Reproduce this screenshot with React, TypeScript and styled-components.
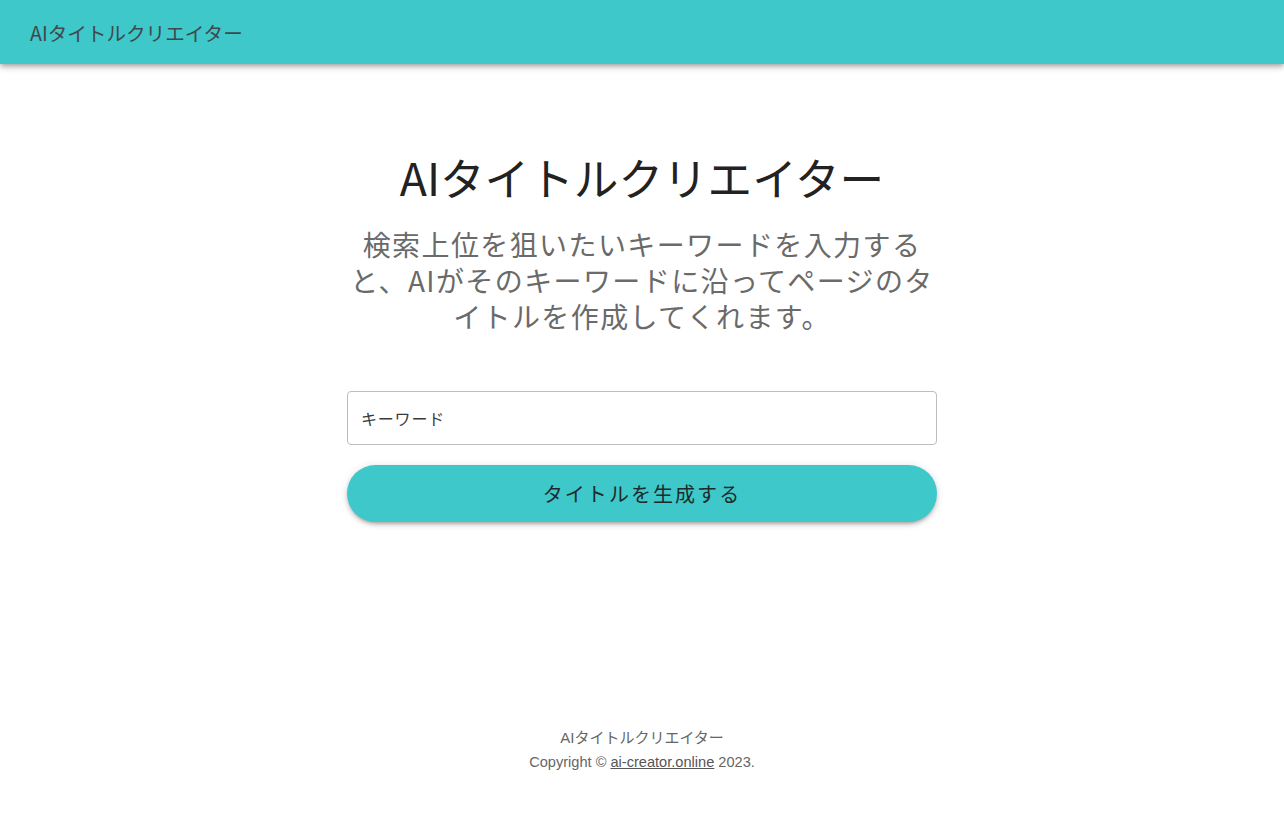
import React from "react";
import styled, { createGlobalStyle } from "styled-components";

const Global = createGlobalStyle`
  html, body { margin: 0; padding: 0; background: #fff; }
  body { font-family: "Noto Sans CJK JP", "Noto Sans", sans-serif; }
  * { box-sizing: border-box; }
`;

const Page = styled.div`
  min-height: 832px;
  display: flex;
  flex-direction: column;
`;

const Header = styled.header`
  height: 64px;
  background: #3ec8c9;
  display: flex;
  align-items: center;
  padding: 0 30px;
  box-shadow: 0 2px 4px -1px rgba(0,0,0,0.2), 0 4px 5px 0 rgba(0,0,0,0.14), 0 1px 10px 0 rgba(0,0,0,0.12);
  position: relative;
  z-index: 1;
`;

const HeaderTitle = styled.div`
  font-size: 19.6px;
  color: #3d4a4b;
`;

const Main = styled.main`
  flex: 1;
  display: flex;
  flex-direction: column;
  align-items: center;
  padding-top: 81px;
`;

const Column = styled.div`
  width: 590px;
  display: flex;
  flex-direction: column;
  align-items: stretch;
`;

const Title = styled.h1`
  margin: 0;
  font-size: 44.6px;
  font-weight: 400;
  line-height: 64px;
  color: #222;
  text-align: center;
`;

const Subtitle = styled.p`
  margin: 17px 0 0;
  font-size: 28px;
  line-height: 36px;
  letter-spacing: 1.4px;
  color: #6a6a6a;
  text-align: center;
`;

const Input = styled.input`
  margin-top: 57px;
  height: 54px;
  border: 1px solid #bdbdbd;
  border-radius: 4px;
  padding: 0 13px;
  font-family: "Noto Sans CJK JP", "Noto Sans", sans-serif;
  font-size: 16px;
  letter-spacing: 0.8px;
  color: #333;
  outline: none;
  &::placeholder { color: #3a3a3a; }
`;

const Button = styled.button`
  margin-top: 20px;
  height: 57px;
  border: none;
  border-radius: 29px;
  background: #3ec8c9;
  color: #1f2a2b;
  font-family: "Noto Sans CJK JP", "Noto Sans", sans-serif;
  font-size: 20px;
  letter-spacing: 2.05px;
  box-shadow: 0 3px 3px -2px rgba(0,0,0,0.2), 0 3px 4px 0 rgba(0,0,0,0.14), 0 1px 8px 0 rgba(0,0,0,0.12);
  cursor: pointer;
`;

const Footer = styled.footer`
  padding: 0 0 57px;
  display: flex;
  flex-direction: column;
  align-items: center;
  font-family: "Liberation Sans", Arial, "Noto Sans CJK JP", sans-serif;
  color: #666;
`;

const FooterName = styled.div`
  font-size: 15px;
  line-height: 22px;
`;

const Copy = styled.div`
  font-size: 14.6px;
  line-height: 26px;
  a { color: #555; text-decoration: underline; }
`;

export default function App() {
  return (
    <Page>
      <Global />
      <Header>
        <HeaderTitle>AIタイトルクリエイター</HeaderTitle>
      </Header>
      <Main>
        <Column>
          <Title>AIタイトルクリエイター</Title>
          <Subtitle>検索上位を狙いたいキーワードを入力すると、AIがそのキーワードに沿ってページのタイトルを作成してくれます。</Subtitle>
          <Input placeholder="キーワード" />
          <Button>タイトルを生成する</Button>
        </Column>
      </Main>
      <Footer>
        <FooterName>AIタイトルクリエイター</FooterName>
        <Copy>
          Copyright © <a href="#">ai-creator.online</a> 2023.
        </Copy>
      </Footer>
    </Page>
  );
}
